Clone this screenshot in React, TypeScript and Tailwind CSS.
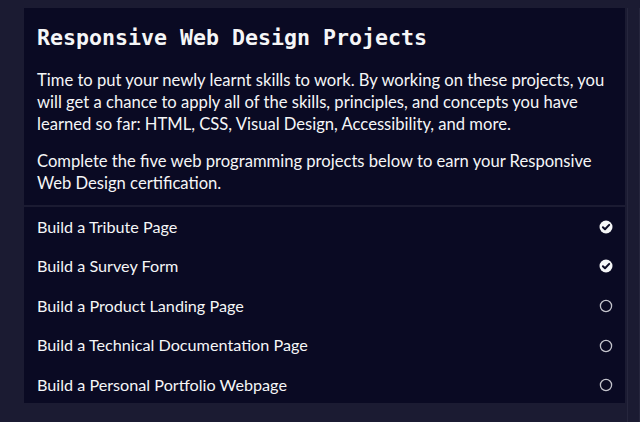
import { FC } from "react";

const projects = [
    { title: "Build a Tribute Page", done: true },
    { title: "Build a Survey Form", done: true },
    { title: "Build a Product Landing Page", done: false },
    { title: "Build a Technical Documentation Page", done: false },
    { title: "Build a Personal Portfolio Webpage", done: false },
];

const CheckCircle: FC = () => (
    <svg width="14" height="14" viewBox="0 0 14 14">
        <circle cx="7" cy="7" r="6.5" fill="#f5f6f7" />
        <path d="M3.9 7.2 L6 9.3 L10.2 4.9" fill="none" stroke="#0a0a23" strokeWidth="2" strokeLinecap="round" strokeLinejoin="round" />
    </svg>
);

const EmptyCircle: FC = () => (
    <svg width="14" height="14" viewBox="0 0 14 14">
        <circle cx="7" cy="7" r="5.6" fill="none" stroke="#c4c4cc" strokeWidth="1.3" />
    </svg>
);

const App: FC = () => {
    return (
        <div className="flex h-[422px] w-[640px] bg-[#1b1b32] pt-2 font-['Lato',sans-serif] text-[#f5f6f7]">
            <section className="ml-6 flex h-[395px] w-[601px] flex-col bg-[#0a0a23]">
                <div className="pl-[13px] pr-[10px] pt-[17px]">
                    <h1 className="font-['DejaVu_Sans_Mono',monospace] text-[21.6px] font-bold leading-[26px]">
                        Responsive Web Design Projects
                    </h1>
                    <p className="mt-[18px] text-[16.6px] leading-[22px]">
                        Time to put your newly learnt skills to work. By working on these projects, you will get a chance to apply all of the skills, principles, and concepts you have learned so far: HTML, CSS, Visual Design, Accessibility, and more.
                    </p>
                    <p className="mt-[15px] text-[16.6px] leading-[22px]">
                        Complete the five web programming projects below to earn your Responsive Web Design certification.
                    </p>
                </div>
                <ul className="mt-[11px] border-t-2 border-[#1b1b32]">
                    {projects.map(p => (
                        <li key={p.title} className="flex h-[39.6px] items-center justify-between pl-[13px] pr-[12px] text-[16.2px]">
                            <span>{p.title}</span>
                            {p.done ? <CheckCircle /> : <EmptyCircle />}
                        </li>
                    ))}
                </ul>
            </section>
            <div className="ml-[2px] h-full w-[13px] border-x border-[#26263d]" />
        </div>
    );
};

export default App;
